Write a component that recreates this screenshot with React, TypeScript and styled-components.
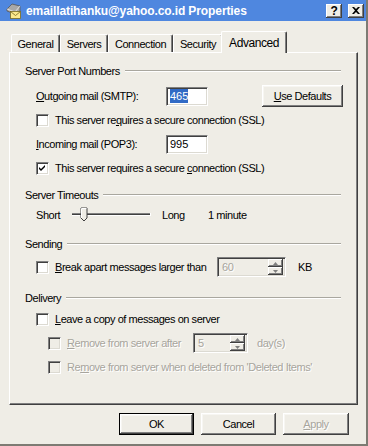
import React from 'react'
import styled, { createGlobalStyle } from 'styled-components'

const GlobalStyle = createGlobalStyle`
  html, body {
    margin: 0;
    padding: 0;
    background: #efede6;
  }
  body {
    font-family: "Liberation Sans", Arial, sans-serif;
    font-size: 11px;
    letter-spacing: -0.45px;
    color: #000;
  }
`

const Window = styled.div`
  width: 368px;
  height: 446px;
  box-sizing: border-box;
  background: #efede6;
  display: flex;
  flex-direction: column;
  border-right: 2px solid #7d7b73;
  border-bottom: 2px solid #7d7b73;
  overflow: hidden;
`

const TitleBar = styled.div`
  height: 21px;
  flex: none;
  background: #4f87df;
  display: flex;
  align-items: center;
  padding: 0 2px 0 5px;
  gap: 4px;
`

const TitleText = styled.div`
  flex: 1;
  color: #fff;
  font-weight: bold;
  font-size: 12px;
  letter-spacing: -0.1px;
  white-space: nowrap;
`

const CaptionButton = styled.div`
  width: 16px;
  height: 14px;
  box-sizing: border-box;
  background: #efede6;
  display: flex;
  align-items: center;
  justify-content: center;
  font-weight: bold;
  font-size: 12px;
  color: #000;
  box-shadow: inset -1px -1px #404040, inset 1px 1px #fff, inset -2px -2px #808080;
  margin-left: 2px;
`

const Content = styled.div`
  flex: 1;
  display: flex;
  flex-direction: column;
  padding: 10px 0 0 9px;
`

const TabStrip = styled.div`
  display: flex;
  align-items: flex-end;
  height: 21px;
  padding-left: 2px;
  position: relative;
  z-index: 1;
`

const Tab = styled.div<{ $w: number; $active?: boolean }>`
  width: ${p => p.$w}px;
  height: ${p => (p.$active ? 22 : 18)}px;
  box-sizing: border-box;
  margin-left: ${p => (p.$active ? -2 : 0)}px;
  margin-bottom: ${p => (p.$active ? -1 : 0)}px;
  background: #efede6;
  border-top: 1px solid #fff;
  border-left: 1px solid #fff;
  border-right: 1px solid #404040;
  box-shadow: inset -1px 0 #808080;
  border-radius: 2px 2px 0 0;
  display: flex;
  justify-content: center;
  padding-top: ${p => (p.$active ? 4 : 3)}px;
  font-size: ${p => (p.$active ? 12 : 11)}px;
`

const Panel = styled.div`
  width: 349px;
  height: 353px;
  box-sizing: border-box;
  border: 1px solid;
  border-color: #fff #404040 #404040 #fff;
  box-shadow: inset -1px -1px #808080;
  display: flex;
  flex-direction: column;
`

const Header = styled.div<{ $top: number }>`
  display: flex;
  align-items: center;
  height: 14px;
  margin: ${p => p.$top}px 16px 0 15px;
  gap: 5px;
`

const Rule = styled.div`
  flex: 1;
  border-top: 1px solid #a9a79f;
  border-bottom: 1px solid #fff;
`

const Row = styled.div<{ $indent?: number; $top?: number }>`
  display: flex;
  align-items: center;
  height: 24px;
  margin-top: ${p => p.$top ?? 0}px;
  padding-left: ${p => p.$indent ?? 26}px;
  padding-right: 14px;
  white-space: nowrap;
`

const Label = styled.span<{ $w?: number; $disabled?: boolean }>`
  display: inline-block;
  width: ${p => (p.$w ? `${p.$w}px` : 'auto')};
  flex: none;
  color: ${p => (p.$disabled ? '#a7a59d' : '#000')};
  text-shadow: ${p => (p.$disabled ? '1px 1px #fff' : 'none')};
`

const Box = styled.div<{ $disabled?: boolean }>`
  width: 13px;
  height: 13px;
  box-sizing: border-box;
  flex: none;
  margin-right: 6px;
  background: ${p => (p.$disabled ? '#efede6' : '#fff')};
  border: 1px solid;
  border-color: #808080 #fff #fff #808080;
  box-shadow: inset 1px 1px #404040, inset -1px -1px #dcdad2;
  display: flex;
  align-items: center;
  justify-content: center;
`

const TextBox = styled.div<{ $w: number }>`
  width: ${p => p.$w}px;
  height: 19px;
  box-sizing: border-box;
  background: #fff;
  border: 1px solid;
  border-color: #808080 #fff #fff #808080;
  box-shadow: inset 1px 1px #404040, inset -1px -1px #dcdad2;
  display: flex;
  align-items: center;
  padding-left: 3px;
  letter-spacing: 0;
`

const Selected = styled.span`
  background: #316ac5;
  color: #fff;
  padding: 1px 0;
`

const Spin = styled.div<{ $w: number }>`
  width: ${p => p.$w}px;
  height: 20px;
  box-sizing: border-box;
  background: #efede6;
  border: 1px solid;
  border-color: #808080 #fff #fff #808080;
  box-shadow: inset 1px 1px #404040, inset -1px -1px #dcdad2;
  display: flex;
  align-items: center;
  padding: 2px 2px 2px 4px;
  color: #a7a59d;
  text-shadow: 1px 1px #fff;
`

const SpinValue = styled.span`
  flex: 1;
`

const SpinButtons = styled.div`
  width: 15px;
  height: 16px;
  display: flex;
  flex-direction: column;
`

const SpinButton = styled.div`
  flex: 1;
  background: #efede6;
  box-shadow: inset -1px -1px #404040, inset 1px 1px #fff, inset -2px -2px #808080;
  display: flex;
  align-items: center;
  justify-content: center;
`

const Button = styled.div<{ $w: number; $default?: boolean; $disabled?: boolean }>`
  width: ${p => p.$w}px;
  height: 22px;
  box-sizing: border-box;
  flex: none;
  display: flex;
  align-items: center;
  justify-content: center;
  background: #efede6;
  border: ${p => (p.$default ? '1px solid #000' : 'none')};
  box-shadow: inset -1px -1px #404040, inset 1px 1px #fff, inset -2px -2px #808080, inset 2px 2px #f7f6f2;
  color: ${p => (p.$disabled ? '#a7a59d' : '#000')};
  text-shadow: ${p => (p.$disabled ? '1px 1px #fff' : 'none')};
`

const ButtonRow = styled.div`
  display: flex;
  justify-content: flex-end;
  gap: 7px;
  margin-top: 8px;
  padding-right: 17px;
`

const SideGap = styled.span<{ $w: number }>`
  display: inline-block;
  width: ${p => p.$w}px;
  flex: none;
`

function Check({ checked, disabled }: { checked?: boolean; disabled?: boolean }) {
  return (
    <Box $disabled={disabled}>
      {checked && (
        <svg width="7" height="7" viewBox="0 0 7 7">
          <path d="M0 2 L2 4 L6 0 L6 2 L2 6 L0 4 Z" fill="#000" />
        </svg>
      )}
    </Box>
  )
}

function Spinner({ w, value }: { w: number; value: string }) {
  return (
    <Spin $w={w}>
      <SpinValue>{value}</SpinValue>
      <SpinButtons>
        <SpinButton>
          <svg width="5" height="3" viewBox="0 0 5 3"><path d="M2.5 0 L5 3 L0 3 Z" fill="#808080" /></svg>
        </SpinButton>
        <SpinButton>
          <svg width="5" height="3" viewBox="0 0 5 3"><path d="M0 0 L5 0 L2.5 3 Z" fill="#808080" /></svg>
        </SpinButton>
      </SpinButtons>
    </Spin>
  )
}

function MailIcon() {
  return (
    <svg width="17" height="16" viewBox="0 0 17 16">
      <path d="M2 6 L7 1 L15 3 L15 8 L10 11 L2 8 Z" fill="#a8a8a8" stroke="#555" strokeWidth="0.8" />
      <path d="M2 6 L10 9 L15 3" fill="none" stroke="#eee" strokeWidth="0.8" />
      <rect x="5.5" y="8.5" width="10" height="7" fill="#fce98c" stroke="#7a6a20" strokeWidth="0.8" />
      <path d="M5.5 8.5 L10.5 12.5 L15.5 8.5" fill="none" stroke="#7a6a20" strokeWidth="0.8" />
    </svg>
  )
}

function Slider() {
  return (
    <svg width="80" height="16" viewBox="0 0 80 16">
      <rect x="0" y="6" width="78" height="1" fill="#808080" />
      <rect x="0" y="7" width="78" height="1" fill="#404040" />
      <rect x="0" y="8" width="78" height="1" fill="#fff" />
      <rect x="78" y="6" width="1" height="3" fill="#fff" />
      <path d="M9 1 L15 1 L15 11 L12 14 L9 11 Z" fill="#efede6" stroke="#404040" strokeWidth="1" />
      <path d="M9.5 11 L9.5 1.5 L14.5 1.5" fill="none" stroke="#fff" strokeWidth="1" />
    </svg>
  )
}

const U = styled.u`
  text-decoration: underline;
`

export default function App() {
  return (
    <>
      <GlobalStyle />
      <Window>
        <TitleBar>
          <MailIcon />
          <TitleText>emaillatihanku@yahoo.co.id Properties</TitleText>
          <CaptionButton>?</CaptionButton>
          <CaptionButton>
            <svg width="8" height="7" viewBox="0 0 8 7">
              <path d="M0 0 L2 0 L4 2 L6 0 L8 0 L5 3.5 L8 7 L6 7 L4 5 L2 7 L0 7 L3 3.5 Z" fill="#000" />
            </svg>
          </CaptionButton>
        </TitleBar>
        <Content>
          <TabStrip>
            <Tab $w={49}>General</Tab>
            <Tab $w={48}>Servers</Tab>
            <Tab $w={65}>Connection</Tab>
            <Tab $w={50}>Security</Tab>
            <Tab $w={66} $active>Advanced</Tab>
          </TabStrip>
          <Panel>
            <Header $top={11}>
              <span>Server Port Numbers</span>
              <Rule />
            </Header>
            <Row $top={6}>
              <Label $w={130}><U>O</U>utgoing mail (SMTP):</Label>
              <TextBox $w={42}><Selected>465</Selected></TextBox>
              <Button $w={81} style={{ marginLeft: 'auto' }}><U>U</U>se Defaults</Button>
            </Row>
            <Row>
              <Check />
              <Label>This server re<U>q</U>uires a secure connection (SSL)</Label>
            </Row>
            <Row>
              <Label $w={130}><U>I</U>ncoming mail (POP3):</Label>
              <TextBox $w={42}>995</TextBox>
            </Row>
            <Row>
              <Check checked />
              <Label>This server requires a secure <U>c</U>onnection (SSL)</Label>
            </Row>
            <Header $top={8}>
              <span>Server Timeouts</span>
              <Rule />
            </Header>
            <Row $top={1}>
              <Label $w={36}>Short</Label>
              <Slider />
              <SideGap $w={10} />
              <Label $w={46}>Long</Label>
              <Label>1 minute</Label>
            </Row>
            <Header $top={10}>
              <span>Sending</span>
              <Rule />
            </Header>
            <Row $top={4}>
              <Check />
              <Label $w={162}><U>B</U>reak apart messages larger than</Label>
              <Spinner w={69} value="60" />
              <SideGap $w={12} />
              <Label>KB</Label>
            </Row>
            <Header $top={12}>
              <span>Delivery</span>
              <Rule />
            </Header>
            <Row $top={2}>
              <Check />
              <Label><U>L</U>eave a copy of messages on server</Label>
            </Row>
            <Row $indent={38}>
              <Check disabled />
              <Label $w={126} $disabled><U>R</U>emove from server after</Label>
              <Spinner w={55} value="5" />
              <SideGap $w={9} />
              <Label $disabled>day(s)</Label>
            </Row>
            <Row $indent={38}>
              <Check disabled />
              <Label $disabled>Re<U>m</U>ove from server when deleted from 'Deleted Items'</Label>
            </Row>
          </Panel>
          <ButtonRow>
            <Button $w={75} $default>OK</Button>
            <Button $w={75}>Cancel</Button>
            <Button $w={66} $disabled><U>A</U>pply</Button>
          </ButtonRow>
        </Content>
      </Window>
    </>
  )
}
